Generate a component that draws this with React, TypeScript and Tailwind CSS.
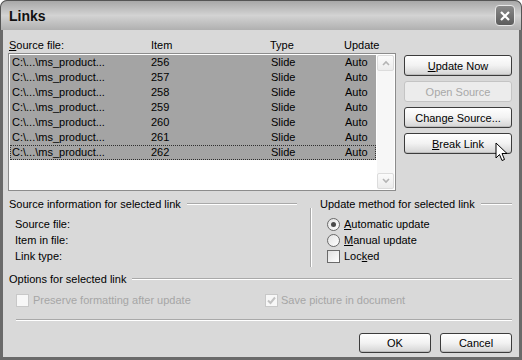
import React from 'react';

const rows = ['256', '257', '258', '259', '260', '261', '262'];

const XpButton = ({
  children,
  disabled,
  className = '',
}: {
  children: React.ReactNode;
  disabled?: boolean;
  className?: string;
}) => (
  <div
    className={`flex items-center justify-center rounded-[3px] border ${
      disabled
        ? 'border-[#c4c4c4] bg-[#ececec] text-[#a8a8a8]'
        : 'border-[#3c3c3c] bg-gradient-to-b from-[#ffffff] via-[#f2f2f2] to-[#d4d4d4] text-black shadow-[inset_0_-1px_0_#bdbdbd]'
    } ${className}`}
  >
    {children}
  </div>
);

const Radio = ({ checked }: { checked?: boolean }) => (
  <span className="w-[13px] h-[13px] rounded-full border border-[#6a6a6a] bg-gradient-to-br from-[#e2e2e2] to-[#ffffff] flex items-center justify-center">
    {checked && <span className="w-[5px] h-[5px] rounded-full bg-[#4a4a4a]" />}
  </span>
);

const Check = ({ checked, disabled }: { checked?: boolean; disabled?: boolean }) => (
  <span
    className={`w-[13px] h-[13px] border flex items-center justify-center ${
      disabled ? 'border-[#c8c8c8] bg-[#f7f7f7]' : 'border-[#6a6a6a] bg-gradient-to-br from-[#e0e0e0] to-[#ffffff]'
    }`}
  >
    {checked && (
      <svg width="9" height="9" viewBox="0 0 9 9">
        <path d="M1 4.5 L3.5 7 L8 1.5" stroke="#c2c2c2" strokeWidth="2" fill="none" />
      </svg>
    )}
  </span>
);

const GroupTitle = ({ text, className = '' }: { text: string; className?: string }) => (
  <div className={`flex items-center h-[16px] ${className}`}>
    <span className="whitespace-nowrap">{text}</span>
    <span className="flex-1 ml-[6px] h-[2px] border-t border-[#a9a9a9] border-b-white border-b" />
  </div>
);

export default function App() {
  return (
    <div
      className="relative w-[522px] h-[360px] bg-[#6a6a6a] rounded-t-[7px] flex flex-col text-[11px] leading-[16px] text-black overflow-hidden"
      style={{ fontFamily: '"Liberation Sans", Arial, sans-serif' }}
    >
      {/* title bar */}
      <div className="h-[30px] flex items-center justify-between pl-[8px] pr-[6px] rounded-t-[7px] border-t border-x border-[#555] bg-gradient-to-b from-[#a8a8a8] via-[#d3d3d3] to-[#b0b0b0]">
        <span className="font-bold text-[14px] text-[#111]">Links</span>
        <div className="w-[20px] h-[21px] rounded-[4px] border border-[#e8e8e8] bg-gradient-to-b from-[#8a8a8a] to-[#5c5c5c] flex items-center justify-center">
          <svg width="12" height="12" viewBox="0 0 12 12">
            <path d="M2 2 L10 10 M10 2 L2 10" stroke="#fff" strokeWidth="2.2" />
          </svg>
        </div>
      </div>

      {/* body */}
      <div className="flex-1 mx-[3px] mb-[3px] bg-[#d9d9d9] pl-[5px] pr-[7px] flex flex-col">
        <div className="flex mt-[7px]">
          <div className="w-[388px] flex flex-col">
            <div className="h-[16px] flex pl-[1px]">
              <span className="w-[142px]">
                <span className="underline">S</span>ource file:
              </span>
              <span className="w-[119px]">Item</span>
              <span className="w-[74px]">Type</span>
              <span>Update</span>
            </div>
            <div className="h-[138px] border border-[#8c8c8c] bg-white flex p-[1px]">
              <div className="flex-1 flex flex-col">
                {rows.map((n, i) => (
                  <div
                    key={n}
                    className={`h-[15px] flex items-center bg-[#a4a4a4] leading-[15px] pl-[2px] ${
                      i === rows.length - 1 ? 'outline outline-1 outline-dotted -outline-offset-1 outline-[#303030]' : ''
                    }`}
                  >
                    <span className="w-[139px]">C:\...\ms_product...</span>
                    <span className="w-[120px]">{n}</span>
                    <span className="w-[74px]">Slide</span>
                    <span>Auto</span>
                  </div>
                ))}
              </div>
              <div className="w-[17px] ml-[1px] bg-[#f7f7f7] flex flex-col justify-between">
                <div className="h-[16px] rounded-[2px] border border-[#dcdcdc] bg-gradient-to-b from-[#fbfbfb] to-[#ececec] flex items-center justify-center">
                  <svg width="8" height="6" viewBox="0 0 8 6">
                    <path d="M1 5 L4 2 L7 5" stroke="#b4b4b4" strokeWidth="1.6" fill="none" />
                  </svg>
                </div>
                <div className="h-[16px] rounded-[2px] border border-[#dcdcdc] bg-gradient-to-b from-[#fbfbfb] to-[#ececec] flex items-center justify-center">
                  <svg width="8" height="6" viewBox="0 0 8 6">
                    <path d="M1 1 L4 4 L7 1" stroke="#b4b4b4" strokeWidth="1.6" fill="none" />
                  </svg>
                </div>
              </div>
            </div>
          </div>
          <div className="ml-[8px] w-[108px] mt-[18px] flex flex-col gap-[5px]">
            <XpButton className="h-[21px]">
              <span>
                <span className="underline">U</span>pdate Now
              </span>
            </XpButton>
            <XpButton className="h-[21px]" disabled>
              Open Source
            </XpButton>
            <XpButton className="h-[21px]">
              <span>
                Chan<span className="underline">g</span>e Source...
              </span>
            </XpButton>
            <XpButton className="h-[21px]">
              <span>
                <span className="underline">B</span>reak Link
              </span>
            </XpButton>
          </div>
        </div>

        {/* source info / update method */}
        <div className="flex items-start mt-[5px]">
          <div className="w-[288px] ml-[1px] flex flex-col">
            <GroupTitle text="Source information for selected link" />
            <div className="mt-[4px] pl-[6px] flex flex-col">
              <span>Source file:</span>
              <span>Item in file:</span>
              <span>Link type:</span>
            </div>
          </div>
          <div className="ml-[13px] mt-[12px] w-[2px] h-[59px] border-l border-[#a9a9a9] border-r border-r-white" />
          <div className="ml-[8px] flex-1 flex flex-col">
            <GroupTitle text="Update method for selected link" />
            <div className="mt-[4px] pl-[7px] flex flex-col">
              <div className="flex items-center h-[16px] gap-[4px]">
                <Radio checked />
                <span>
                  <span className="underline">A</span>utomatic update
                </span>
              </div>
              <div className="flex items-center h-[16px] gap-[4px]">
                <Radio />
                <span>
                  <span className="underline">M</span>anual update
                </span>
              </div>
              <div className="flex items-center h-[16px] gap-[4px]">
                <Check />
                <span>
                  Loc<span className="underline">k</span>ed
                </span>
              </div>
            </div>
          </div>
        </div>

        <GroupTitle text="Options for selected link" className="mt-[4px] ml-[1px]" />
        <div className="flex mt-[5px] h-[16px] items-center text-[#a6a6a6]">
          <div className="ml-[8px] w-[249px] flex items-center gap-[4px]">
            <Check disabled />
            <span>Preserve formatting after update</span>
          </div>
          <div className="flex items-center gap-[3px]">
            <Check disabled checked />
            <span>Save picture in document</span>
          </div>
        </div>

        <div className="ml-[8px] mt-[11px] h-[2px] border-t border-[#a9a9a9] border-b border-b-white" />

        <div className="flex justify-end gap-[9px] mt-[12px]">
          <XpButton className="w-[72px] h-[20px]">OK</XpButton>
          <XpButton className="w-[72px] h-[20px]">Cancel</XpButton>
        </div>
      </div>

      {/* mouse pointer */}
      <svg className="absolute left-[495px] top-[142px]" width="14" height="21" viewBox="0 0 14 21">
        <path
          d="M1 1 L1 16 L4.5 12.5 L7 18.5 L9.5 17.5 L7 11.5 L12 11.5 Z"
          fill="#fff"
          stroke="#000"
          strokeWidth="1"
          strokeLinejoin="miter"
        />
      </svg>
    </div>
  );
}
